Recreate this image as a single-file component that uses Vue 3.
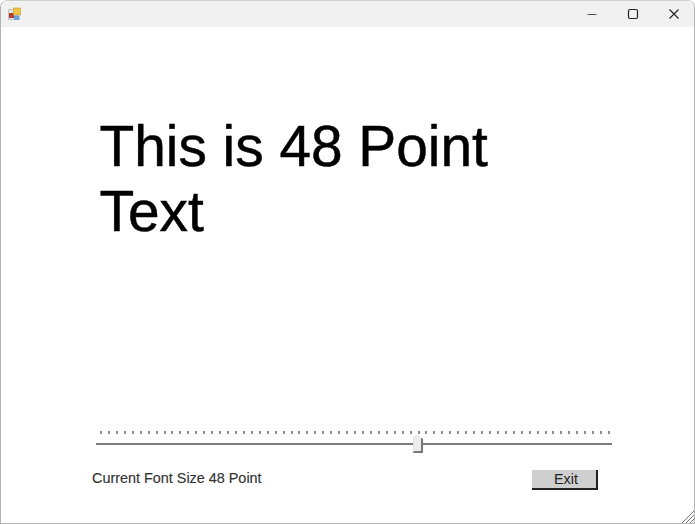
<script setup>
const fontSize = 48
const tickCount = 65
const ticks = Array.from({ length: tickCount }, (_, i) => i)
</script>

<template>
  <div class="window">
    <div class="titlebar">
      <svg class="app-icon" width="14" height="14" viewBox="0 0 14 14">
        <rect x="0.5" y="2.5" width="8" height="10" fill="#e4e4e4" stroke="#c4c4c4" />
        <rect x="1" y="6" width="5" height="5" fill="#b5403a" />
        <rect x="5.5" y="1" width="7" height="7" fill="#eec545" stroke="#b99a3a" stroke-width="0.6" />
        <rect x="6" y="8.5" width="5.5" height="4.5" fill="#6f9fd8" />
      </svg>
      <div class="controls">
        <svg width="12" height="12" viewBox="0 0 12 12">
          <path d="M1.5 6.5h9" stroke="#555" fill="none" />
        </svg>
        <svg width="12" height="12" viewBox="0 0 12 12">
          <rect x="1.5" y="1.5" width="9" height="9" rx="1.5" stroke="#222" stroke-width="1.2" fill="none" />
        </svg>
        <svg width="12" height="12" viewBox="0 0 12 12">
          <path d="M1.5 1.5l9 9M10.5 1.5l-9 9" stroke="#222" stroke-width="1.1" fill="none" />
        </svg>
      </div>
    </div>

    <div class="content">
      <div class="sample">This is {{ fontSize }} Point Text</div>

      <div class="slider">
        <div class="ticks">
          <span v-for="t in ticks" :key="t" class="tick"></span>
        </div>
        <div class="track">
          <span class="thumb"></span>
        </div>
      </div>

      <div class="footer">
        <span class="label">Current Font Size {{ fontSize }} Point</span>
        <button class="exit">Exit</button>
      </div>
    </div>

    <svg class="grip" width="13" height="13" viewBox="0 0 13 13">
      <path d="M13 1L1 13M13 5L5 13M13 9L9 13" stroke="#777" fill="none" />
    </svg>
  </div>
</template>

<style>
html, body {
  margin: 0;
  background: #fff;
  overflow: hidden;
}
</style>

<style scoped>
.window {
  position: relative;
  width: 695px;
  height: 524px;
  box-sizing: border-box;
  display: flex;
  flex-direction: column;
  background: #fff;
  border: 1px solid #b4b4b4;
  border-top-color: #d0d0d0;
  border-radius: 7px 7px 0 0;
  overflow: hidden;
  font-family: "Liberation Sans", Arial, sans-serif;
}
.titlebar {
  height: 26px;
  flex: none;
  display: flex;
  align-items: center;
  justify-content: space-between;
  padding: 0 14px 0 7px;
  background: #f1f1f1;
}
.app-icon {
  margin-top: -1px;
}
.controls {
  display: flex;
  gap: 29px;
  margin-top: -1px;
}
.content {
  flex: 1;
  display: flex;
  flex-direction: column;
  padding: 0 0 0 91px;
}
.sample {
  width: 470px;
  margin: 87px 0 0 7.5px;
  font-size: 56.8px;
  line-height: 65px;
  color: #000;
  -webkit-text-stroke: 0.5px #000;
}
.slider {
  width: 516px;
  margin: 187px 0 0 4px;
}
.ticks {
  display: flex;
  justify-content: space-between;
  padding: 0 2px 0 4px;
}
.tick {
  width: 2px;
  height: 3px;
  background: #8e8e8e;
}
.track {
  position: relative;
  height: 2px;
  margin-top: 9px;
  background: #7c7c7c;
}
.thumb {
  position: absolute;
  left: 317px;
  top: -9px;
  width: 10px;
  height: 19px;
  box-sizing: border-box;
  background: #ececec;
  border-right: 2px solid #777;
  border-bottom: 2px solid #777;
  border-left: 1px solid #e0e0e0;
  clip-path: polygon(0 4px, 30% 0, 100% 5px, 100% 100%, 0 100%);
}
.footer {
  display: flex;
  align-items: center;
  justify-content: space-between;
  width: 506px;
  margin-top: 25px;
}
.label {
  font-size: 14.4px;
  color: #333;
  margin-top: -5px;
  -webkit-text-stroke: 0.15px #333;
}
.exit {
  width: 66px;
  height: 20px;
  padding: 0 0 0 4px;
  box-sizing: border-box;
  background: #cfcfcf;
  border: none;
  border-right: 2px solid #222;
  border-bottom: 2px solid #222;
  font-family: inherit;
  font-size: 14.4px;
  color: #222;
}
.grip {
  position: absolute;
  right: 0;
  bottom: 0;
}
</style>
